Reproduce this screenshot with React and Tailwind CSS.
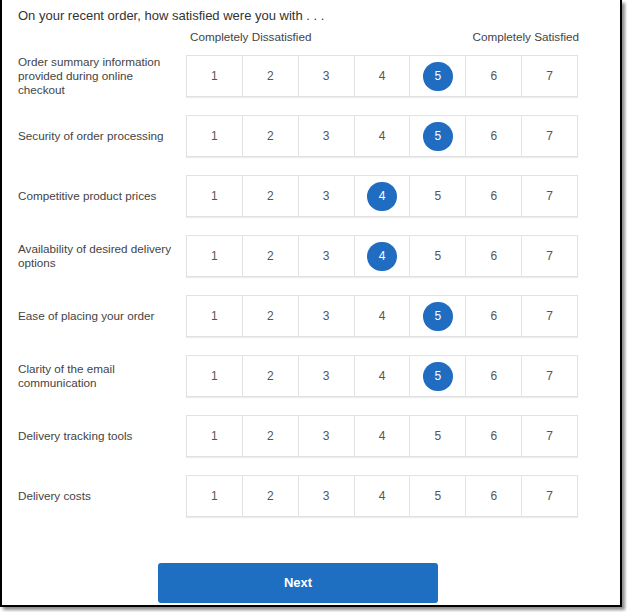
import React, { useState } from 'react';

const ITEMS = [
  { label: 'Order summary information provided during online checkout', value: 5 },
  { label: 'Security of order processing', value: 5 },
  { label: 'Competitive product prices', value: 4 },
  { label: 'Availability of desired delivery options', value: 4 },
  { label: 'Ease of placing your order', value: 5 },
  { label: 'Clarity of the email communication', value: 5 },
  { label: 'Delivery tracking tools', value: null },
  { label: 'Delivery costs', value: null },
];

const SCALE = [1, 2, 3, 4, 5, 6, 7];

function RatingRow({ label, value, onPick }) {
  return (
    <div className="flex items-center h-[42px]">
      <div className="w-[168px] pr-2 text-[11.7px] leading-[14px] text-[#444]">{label}</div>
      <div className="flex w-[392px] h-[42px] border border-[#e2e2e2] shadow-[0_1px_1px_rgba(0,0,0,0.08)]">
        {SCALE.map((n) => (
          <button
            key={n}
            onClick={() => onPick(n)}
            className="flex-1 h-full flex items-center justify-center border-l border-[#e2e2e2] first:border-l-0 text-[12px] text-[#555]"
          >
            {value === n ? (
              <span className="w-[30px] h-[29px] rounded-full bg-[#1f6cc0] text-white flex items-center justify-center">
                {n}
              </span>
            ) : (
              n
            )}
          </button>
        ))}
      </div>
    </div>
  );
}

export default function App() {
  const [answers, setAnswers] = useState(ITEMS.map((i) => i.value));

  return (
    <div className="w-[627px] h-[612px] bg-white" style={{ fontFamily: '"Liberation Sans", Arial, sans-serif' }}>
      <div className="w-[622px] h-[607px] border-x-2 border-b-2 border-black bg-white shadow-[3px_3px_3px_rgba(0,0,0,0.45)] pl-4 flex flex-col">
        <h1 className="mt-[8px] text-[13px] leading-[16px] text-[#333]">
          On your recent order, how satisfied were you with . . .
        </h1>
        <div className="mt-[6px] ml-[172px] w-[389px] flex justify-between text-[11.7px] leading-[14px] text-[#444]">
          <span>Completely Dissatisfied</span>
          <span>Completely Satisfied</span>
        </div>

        {/* rating grid */}
        <div className="mt-[11px] flex flex-col gap-[18px]">
          {ITEMS.map((item, i) => (
            <RatingRow
              key={item.label}
              label={item.label}
              value={answers[i]}
              onPick={(n) => setAnswers((a) => a.map((v, j) => (j === i ? n : v)))}
            />
          ))}
        </div>

        <button className="mt-[46px] ml-[140px] w-[280px] h-[40px] rounded-[3px] bg-[#1e6ec2] text-white text-[13px] font-bold">
          Next
        </button>
      </div>
    </div>
  );
}
